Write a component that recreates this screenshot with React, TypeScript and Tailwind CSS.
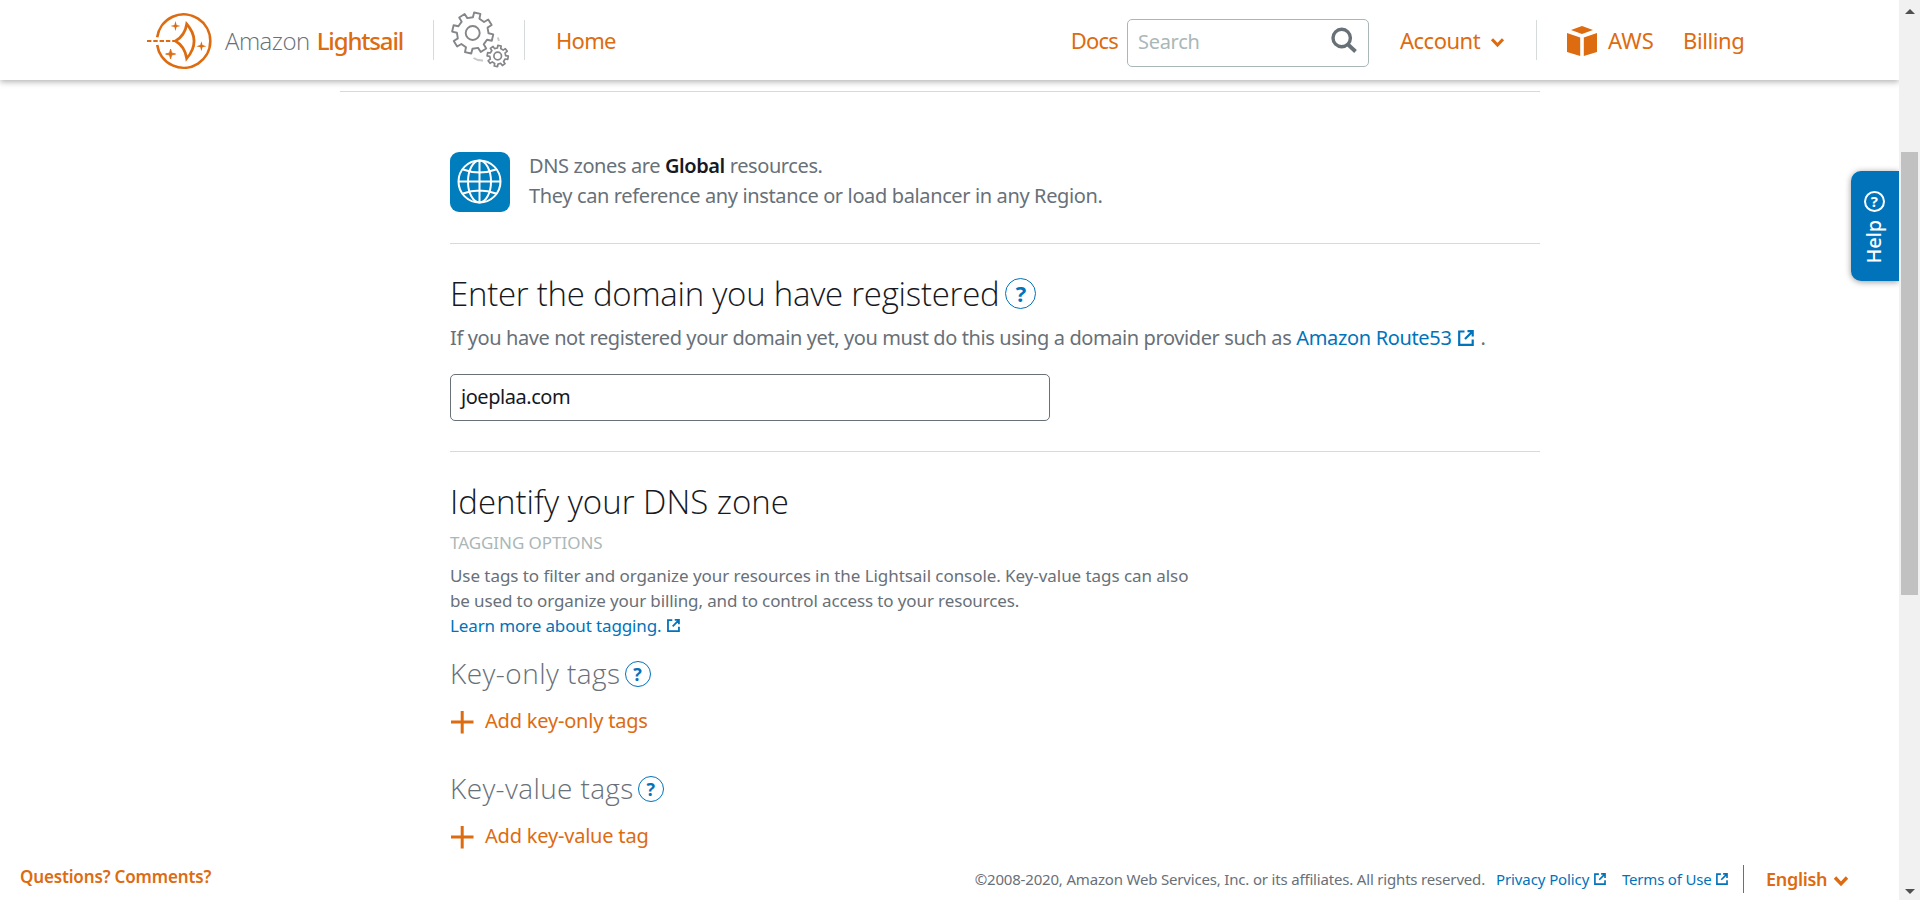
import type { ReactNode } from "react";

function gearPath(cx: number, cy: number, outer: number, inner: number, teeth: number, offset: number) {
  const step = 360 / teeth;
  const points: string[] = [];
  for (let i = 0; i < teeth; i++) {
    const a = offset + i * step;
    const corners: [number, number][] = [
      [a - step * 0.27, inner],
      [a - step * 0.2, outer],
      [a + step * 0.2, outer],
      [a + step * 0.27, inner],
    ];
    for (const [deg, r] of corners) {
      const rad = (deg * Math.PI) / 180;
      points.push(`${(cx + r * Math.cos(rad)).toFixed(2)} ${(cy + r * Math.sin(rad)).toFixed(2)}`);
    }
  }
  return `M${points.join("L")}Z`;
}

function Logo() {
  const star = "l1.1 3.9 3.9 1.1-3.9 1.1-1.1 3.9-1.1-3.9-3.9-1.1 3.9-1.1z";
  return (
    <svg viewBox="0 0 72 72" className="h-[72px] w-[72px] shrink-0" fill="none" stroke="#dd6b10" strokeWidth="2.6">
      <path d="M10.2 33.2A26.7 26.7 0 1 1 10.2 41" />
      <path d="M0 37h29" strokeWidth="2" strokeDasharray="4.4 1.9" />
      <path d="M39.7 20Q54.500 37 39.7 54.500Q38 42.500 28.500 37Q38 31.500 39.7 20Z" strokeWidth="2.7" strokeLinejoin="miter" />
      <g fill="#dd6b10" stroke="none">
        <path d={`M28.5 17${star}`} />
        <path d={`M23.6 45${star}`} strokeWidth="0.8" stroke="#dd6b10" />
        <path d={`M54.4 37.2${star}`} />
      </g>
    </svg>
  );
}

function Gears() {
  return (
    <svg viewBox="0 0 60 60" className="h-[60px] w-[60px] shrink-0" fill="none" stroke="#848689" strokeWidth="1.9" strokeLinejoin="round">
      <path d={gearPath(22.7, 23, 20.6, 15.8, 8, -77)} />
      <circle cx="22.7" cy="23" r="7" />
      <path d={gearPath(47.7, 46, 10.6, 8, 8, -80)} strokeWidth="1.7" />
      <circle cx="47.7" cy="46" r="3.8" strokeWidth="1.7" />
      <path d="M23.5 48q4 2.7 9.500 2.500M47.900 27.500l1 3.500" stroke="#c6c8ca" />
    </svg>
  );
}

function Chevron({ className }: { className: string }) {
  return (
    <svg viewBox="0 0 16 12" className={className} fill="none" stroke="#dd6b10" strokeWidth="3.4">
      <path d="M2 2.500l6 6.300 6-6.300" />
    </svg>
  );
}

function External({ className }: { className: string }) {
  return (
    <svg viewBox="0 0 16 16" className={className} fill="none" stroke="#0073bb" strokeWidth="2.2">
      <path d="M6.500 1.500H1.200v13.300h13.500V9.500M9.500 1.200h5.200v5.300M14.500 1.500L7 9" />
    </svg>
  );
}

function HelpMark({ className }: { className: string }) {
  return (
    <span className={`flex shrink-0 items-center justify-center rounded-full border-[#0073bb] font-bold text-[#0073bb] ${className}`}>
      ?
    </span>
  );
}

function AddLink({ children, className }: { children: ReactNode; className: string }) {
  return (
    <div className={`flex items-center text-[20px] leading-[30px] tracking-[-0.2px] text-[#dd6b10] ${className}`}>
      <svg viewBox="0 0 24 24" className="mt-[2px] mr-[11px] h-6 w-6" stroke="#dd6b10" strokeWidth="3">
        <path d="M1 12h22.500M12.200 1v22.500" />
      </svg>
      {children}
    </div>
  );
}

function Header() {
  return (
    <header className="relative z-10 flex h-20 items-center bg-white text-[22px] text-[#dd6b10] shadow-[0_2px_6px_rgba(0,0,0,0.3)]">
      <div className="ml-[147px] flex w-[286px] items-center">
        <Logo />
        <div className="ml-[6px] flex gap-[7px] pt-[2px] text-[24px] leading-9">
          <span className="font-['Open_Sans'] font-light tracking-[-0.5px] text-[#687078]">Amazon</span>
          <span className="font-medium tracking-[-1.15px]">Lightsail</span>
        </div>
      </div>
      <div className="flex h-10 w-[92px] items-center border-x border-[#d5dbdb] pl-[16px]">
        <Gears />
      </div>
      <nav className="flex flex-1 items-center">
        <span className="ml-[31px] tracking-[-0.7px]">Home</span>
        <span className="ml-auto tracking-[-0.8px]">Docs</span>
        <div className="mt-[5px] mr-[31px] ml-[9px] flex h-12 w-[242px] items-center justify-between rounded-[5px] border border-[#aab7b8] pr-[11px] pl-[10px] text-[20px] tracking-[-0.3px] text-[#aab7b8]">
          <span className="mb-[2px]">Search</span>
          <svg viewBox="0 0 26 26" className="mb-[6px] h-[26px] w-[26px]" fill="none" stroke="#687078" strokeWidth="3.4">
            <circle cx="10.700" cy="11" r="8.700" />
            <path d="M17 17.500l7.500 7" strokeWidth="3.8" />
          </svg>
        </div>
        <span className="w-[90px] tracking-[-0.5px]">Account</span>
        <Chevron className="mt-[4px] h-[11px] w-[15px]" />
      </nav>
      <div className="ml-[31px] flex h-10 w-[363px] items-center border-l border-[#d5dbdb] pl-[30px]">
        <svg viewBox="0 0 30 30" className="mt-[2px] h-[30px] w-[30px]" fill="#dd6b10">
          <path d="M15 0l11 4-11 4L4 4zM0 7l13.200 4.500V30L0 26zM30 7l-13.200 4.500V30L30 26z" />
        </svg>
        <span className="ml-[11px] w-[75px]">AWS</span>
        <span className="tracking-[-0.4px]">Billing</span>
      </div>
    </header>
  );
}

function Content() {
  return (
    <main className="flex-1 overflow-hidden pt-[11px]">
      <div className="ml-[340px] h-px w-[1200px] bg-[#d5dbdb]" />
      <div className="ml-[450px] w-[1090px] text-[#687078]">
        <section className="flex h-[152px] border-b border-[#d5dbdb] pt-[60px]">
          <svg viewBox="0 0 60 60" className="h-[60px] w-[60px]" fill="none" stroke="white" strokeWidth="2">
            <rect width="60" height="60" rx="9" fill="#007dbc" stroke="none" />
            <circle cx="29.500" cy="29.500" r="21" />
            <ellipse cx="29.500" cy="29.500" rx="11.500" ry="21" />
            <path d="M29.500 8.500v42M8.500 29.500h42M13 17.500q16.500 6 33 0M13 41.500q16.500-6 33 0" />
          </svg>
          <div className="-mt-px ml-[19px] text-[20px] leading-[30px]">
            <p className="tracking-[-0.4px]">
              DNS zones are <b className="font-semibold text-[#16191f]">Global</b> resources.
            </p>
            <p className="tracking-[-0.37px]">They can reference any instance or load balancer in any Region.</p>
          </div>
        </section>

        <section className="h-[208px] border-b border-[#d5dbdb] pt-[28px]">
          <h2 className="flex h-[44px] items-center font-['Open_Sans'] text-[33px] leading-[44px] font-light tracking-[-0.26px] text-[#16191f]">
            Enter the domain you have registered
            <HelpMark className="mb-[2px] ml-[6px] h-[31px] w-[31px] border-[1.5px] text-[22px] tracking-normal" />
          </h2>
          <p className="mt-[6px] flex h-[32px] items-center text-[20px] whitespace-nowrap">
            <span className="tracking-[-0.4px]">
              If you have not registered your domain yet, you must do this using a domain provider such as
            </span>
            <a className="ml-[5px] flex items-center tracking-[-0.35px] text-[#0073bb]">
              Amazon Route53
              <External className="ml-[7px] h-4 w-4" />
            </a>
            <span className="ml-[6px]">.</span>
          </p>
          <div className="mt-[20px] flex h-[47px] w-[600px] items-center rounded-[5px] border border-[#687078] pb-[2px] pl-[10px] text-[20px] tracking-[-0.45px] text-[#16191f]">
            joeplaa.com
          </div>
        </section>

        <section className="pt-[28px]">
          <h2 className="h-[44px] font-['Open_Sans'] text-[33px] leading-[44px] font-light tracking-[0px] text-[#16191f]">
            Identify your DNS zone
          </h2>
          <p className="mt-[7px] h-[24px] text-[17px] leading-6 tracking-[-0.05px] text-[#aab7b8]">TAGGING OPTIONS</p>
          <p className="mt-[8px] text-[17px] leading-[25px] tracking-[-0.06px]">
            Use tags to filter and organize your resources in the Lightsail console. Key-value tags can also
            <br />
            <span className="tracking-[-0.12px]">be used to organize your billing, and to control access to your resources.</span>
          </p>
          <a className="flex h-[25px] items-center text-[17px] leading-[25px] tracking-[-0.13px] text-[#0073bb]">
            Learn more about tagging. <External className="ml-[6px] h-[13px] w-[13px]" />
          </a>
          <h3 className="mt-[15px] flex h-[40px] items-center font-['Open_Sans'] text-[28px] leading-10 font-light tracking-[0.45px]">
            Key-only tags
            <HelpMark className="mt-[2px] ml-[4px] h-[26px] w-[26px] border-[1.3px] text-[18px] tracking-normal" />
          </h3>
          <AddLink className="mt-[13px]">Add key-only tags</AddLink>
          <h3 className="mt-[32px] flex h-[40px] items-center font-['Open_Sans'] text-[28px] leading-10 font-light tracking-[0.37px]">
            Key-value tags
            <HelpMark className="mt-[2px] ml-[4px] h-[26px] w-[26px] border-[1.3px] text-[18px] tracking-normal" />
          </h3>
          <AddLink className="mt-[13px]">Add key-value tag</AddLink>
        </section>
      </div>
    </main>
  );
}

function Footer() {
  return (
    <footer className="flex h-[42px] shrink-0 items-center bg-white text-[15px] text-[#0073bb]">
      <span className="mb-[4px] ml-[20px] text-[17px] font-semibold tracking-[-0.15px] text-[#dd6b10]">Questions? Comments?</span>
      <span className="ml-auto tracking-[-0.18px] text-[#687078]">
        ©2008-2020, Amazon Web Services, Inc. or its affiliates. All rights reserved.
      </span>
      <a className="ml-[11px] flex w-[126px] items-center tracking-[-0.1px]">
        Privacy Policy <External className="ml-[5px] h-3 w-3" />
      </a>
      <a className="flex w-[121px] items-center tracking-[-0.2px]">
        Terms of Use <External className="ml-[5px] h-3 w-3" />
      </a>
      <div className="flex h-7 w-[156px] items-center border-l border-[#687078] pl-[22px] text-[18px] font-semibold tracking-[-0.3px] text-[#dd6b10]">
        English <Chevron className="mt-[3px] ml-[6px] h-[12px] w-[16px]" />
      </div>
    </footer>
  );
}

export default function App() {
  return (
    <div className="relative flex h-[900px] w-[1920px] overflow-hidden bg-white font-['Noto_Sans',sans-serif]">
      <div className="flex w-[1899px] flex-col overflow-hidden">
        <Header />
        <Content />
        <Footer />
      </div>
      <div className="absolute top-[171px] left-[1851px] flex h-[110px] w-12 flex-col items-center rounded-l-[10px] bg-[#0073bb] pt-[20px] pr-[2px] text-white shadow-[0_1px_6px_rgba(0,0,0,0.4)]">
        <span className="flex h-[21px] w-[21px] -rotate-90 items-center justify-center rounded-full border-2 border-white text-[15px] font-bold">
          <span className="rotate-90">?</span>
        </span>
        <span className="mt-[8px] rotate-180 text-[20px] leading-6 font-medium tracking-[-0.2px] [writing-mode:vertical-rl]">Help</span>
      </div>
      <div className="z-10 flex w-[21px] flex-col items-center bg-[#f1f1f1]">
        <svg viewBox="0 0 10 5" className="mt-[9px] h-[5px] w-[10px]" fill="#505050"><path d="M5 0l5 5H0z" /></svg>
        <div className="mt-[138px] h-[443px] w-[17px] bg-[#c1c1c1]" />
        <svg viewBox="0 0 10 5" className="mt-auto mb-[6px] h-[5px] w-[10px]" fill="#505050"><path d="M5 5l5-5H0z" /></svg>
      </div>
    </div>
  );
}
